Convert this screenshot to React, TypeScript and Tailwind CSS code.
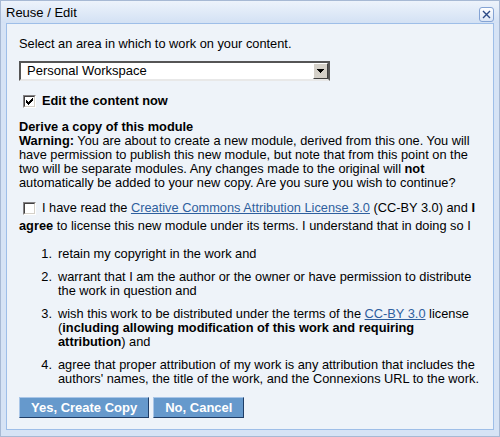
import React from 'react';

const font = 'font-["Liberation_Sans",Arial,sans-serif]';

function CheckBox({ checked }: { checked?: boolean }) {
  return (
    <span className="inline-flex h-[13px] w-[13px] shrink-0 border border-t-[#848284] border-l-[#848284] border-r-white border-b-white align-middle">
      <span className="flex h-full w-full items-center justify-center border border-t-[#424142] border-l-[#424142] border-r-[#d4d0c8] border-b-[#d4d0c8] bg-white">
        {checked && (
          <svg width="7" height="7" viewBox="0 0 7 7" shapeRendering="crispEdges">
            <path d="M0 2h1v3h-1zM1 3h1v3h-1zM2 4h1v3h-1zM3 3h1v3h-1zM4 2h1v3h-1zM5 1h1v3h-1zM6 0h1v3h-1z" fill="#000" />
          </svg>
        )}
      </span>
    </span>
  );
}

function Select() {
  return (
    <div className="flex h-[20px] w-[311px] border-2 border-t-[#555] border-l-[#555] border-r-[#555] border-b-[#e8e8e8] bg-white">
      <div className="flex-1 pl-[6px] text-[13px] leading-[16px] text-black">Personal Workspace</div>
      <div className="flex w-[15px] items-center justify-center border border-t-white border-l-white border-r-[#404040] border-b-[#404040] bg-[#d4d0c8]">
        <svg width="7" height="4" viewBox="0 0 7 4" shapeRendering="crispEdges">
          <path d="M0 0h7v1h-1v1h-1v1h-1v1h-1v-1h-1v-1h-1v-1h-1z" fill="#000" />
        </svg>
      </div>
    </div>
  );
}

function Btn({ children }: { children: React.ReactNode }) {
  return (
    <button className="h-[21px] border border-t-[#a9c6e8] border-l-[#a9c6e8] border-r-[#1f3d66] border-b-[#1f3d66] bg-[#6699cc] px-[11px] text-[13px] font-bold leading-[18px] text-white">
      {children}
    </button>
  );
}

const items: React.ReactNode[] = [
  <>retain my copyright in the work and</>,
  <>
    warrant that I am the author or the owner or have permission to distribute
    <br />
    the work in question and
  </>,
  <>
    wish this work to be distributed under the terms of the{' '}
    <a className="text-[#2e5f9e] underline">CC-BY 3.0</a> license
    <br />
    (<b>including allowing modification of this work and requiring</b>
    <br />
    <b>attribution</b>) and
  </>,
  <>
    agree that proper attribution of my work is any attribution that includes the
    <br />
    authors&apos; names, the title of the work, and the Connexions URL to the work.
  </>,
];

export default function App() {
  return (
    <div className={`${font} h-[437px] w-[500px] overflow-hidden border border-[#a7b9d4] bg-[#d6e3f5] text-[12.8px] leading-[14px] text-black`}>
      {/* title bar */}
      <div className="flex h-[22px] items-center justify-between bg-gradient-to-b from-[#edf3fb] to-[#d3e1f4] pl-[5px] pr-[5px]">
        <span className="pt-[1px] text-[13px]">Reuse / Edit</span>
        <button className="mt-[4px] flex h-[15px] w-[15px] items-center justify-center rounded-[3px] border border-[#84a3d4] bg-gradient-to-b from-white to-[#dbe6f6]">
          <svg width="9" height="9" viewBox="0 0 9 9">
            <path d="M1 1L8 8M8 1L1 8" stroke="#2b4a86" strokeWidth="1.4" />
          </svg>
        </button>
      </div>

      {/* content panel */}
      <div className="mx-[5px] h-[407px] whitespace-nowrap border border-[#9ebee8] bg-[#eef3f9] px-[12px] pt-[13px]">
        <p>Select an area in which to work on your content.</p>
        <div className="mt-[10px]">
          <Select />
        </div>
        <label className="mt-[13px] flex items-center gap-[6px] pl-[4px] font-bold">
          <CheckBox checked />
          Edit the content now
        </label>

        <h3 className="mt-[12px] font-bold">Derive a copy of this module</h3>
        <p>
          <b>Warning:</b> You are about to create a new module, derived from this one. You will
          <br />
          have permission to publish this new module, but note that from this point on the
          <br />
          two will be separate modules. Any changes made to the original will <b>not</b>
          <br />
          automatically be added to your new copy. Are you sure you wish to continue?
        </p>

        <p className="mt-[9px] leading-[18px]">
          <span className="inline-flex w-[23px] justify-end pr-[6px] align-[-2px]">
            <CheckBox />
          </span>
          I have read the{' '}
          <a className="text-[#2e5f9e] underline">Creative Commons Attribution License 3.0</a>{' '}
          (CC-BY 3.0) and <b>I</b>
          <br />
          <b>agree</b> to license this new module under its terms. I understand that in doing so I
        </p>

        <ol className="mt-[12px] flex flex-col gap-[9px]">
          {items.map((it, i) => (
            <li key={i} className="flex">
              <span className="w-[39px] shrink-0 pr-[6px] text-right">{i + 1}.</span>
              <span>{it}</span>
            </li>
          ))}
        </ol>

        <div className="mt-[11px] flex gap-[4px]">
          <Btn>Yes, Create Copy</Btn>
          <Btn>No, Cancel</Btn>
        </div>
      </div>
    </div>
  );
}
